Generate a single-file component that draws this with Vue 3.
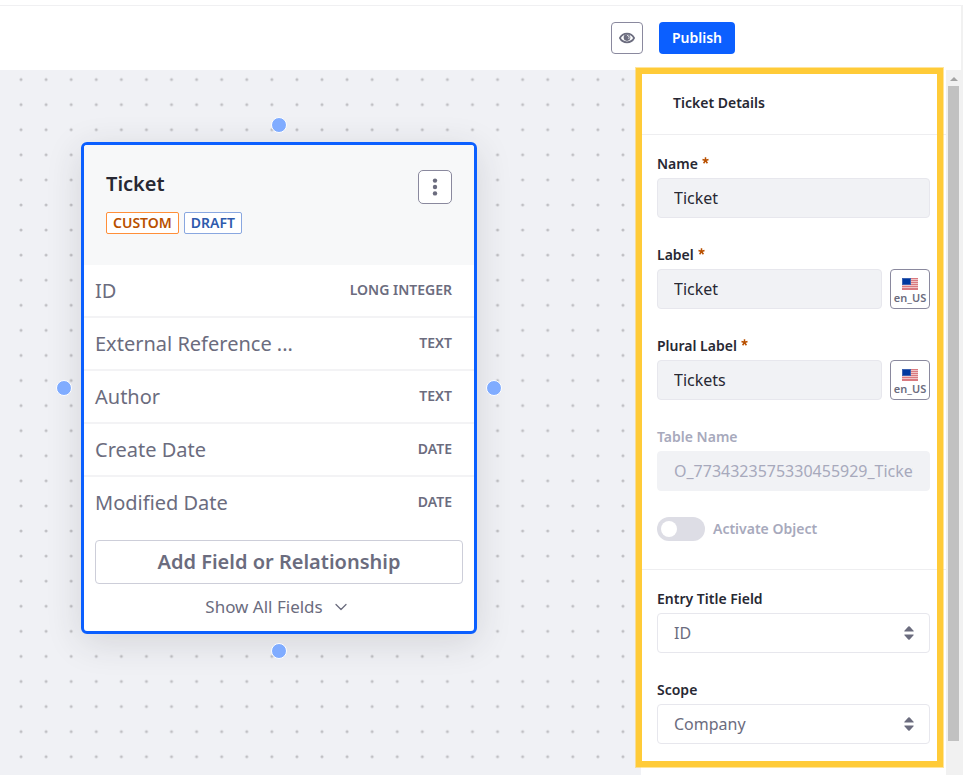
<script setup>
import { ref } from 'vue'

const fields = [
  { name: 'ID', type: 'Long Integer' },
  { name: 'External Reference ...', type: 'Text' },
  { name: 'Author', type: 'Text' },
  { name: 'Create Date', type: 'Date' },
  { name: 'Modified Date', type: 'Date' },
]
const handles = ['top', 'right', 'bottom', 'left']

const details = ref([
  { id: 'name', label: 'Name', value: 'Ticket', required: true },
  { id: 'label', label: 'Label', value: 'Ticket', required: true, localized: true },
  { id: 'plural', label: 'Plural Label', value: 'Tickets', required: true, localized: true },
  { id: 'table', label: 'Table Name', value: 'O_7734323575330455929_Ticket', disabled: true },
])
const selects = ref([
  { id: 'title-field', label: 'Entry Title Field', value: 'ID', options: ['ID', 'Author', 'Create Date'] },
  { id: 'scope', label: 'Scope', value: 'Company', options: ['Company', 'Site'] },
])
</script>

<template>
  <div class="page">
    <header class="toolbar">
      <button class="preview" type="button" aria-label="Preview">
        <svg width="16" height="16" viewBox="0 0 16 16" aria-hidden="true">
          <path d="M.9 8C2.400 5 5 3.700 8 3.700S13.600 5 15.100 8C13.600 11 11 12.300 8 12.300S2.400 11 .9 8Z" fill="none" stroke="currentColor" stroke-width="1.700" />
          <circle cx="8" cy="7.600" r="3.300" fill="currentColor" />
          <path d="M8.600 5a1.900 1.900 0 1 0 2 3.300A3 3 0 0 0 8.600 5Z" fill="#fff" />
          <circle cx="8.300" cy="7.500" r="1.400" fill="currentColor" />
        </svg>
      </button>
      <button class="publish" type="button">Publish</button>
    </header>

    <main class="workspace">
      <section class="canvas">
        <svg class="dots" width="100%" height="100%" aria-hidden="true">
          <defs>
            <pattern id="dot-grid" x="8.500" y="-3" width="25.080" height="25.080" patternUnits="userSpaceOnUse">
              <circle cx="12.540" cy="12.540" r="1.500" fill="#bfbfc3" />
            </pattern>
          </defs>
          <rect width="100%" height="100%" fill="url(#dot-grid)" />
        </svg>

        <article class="node">
          <span v-for="side in handles" :key="side" class="handle" :class="side"></span>
          <div class="node-head">
            <div>
              <h2>Ticket</h2>
              <div class="tags">
                <span class="tag custom">CUSTOM</span>
                <span class="tag draft">DRAFT</span>
              </div>
            </div>
            <button class="kebab" type="button" aria-label="More actions">
              <svg width="20" height="20" viewBox="0 0 20 20" fill="currentColor" aria-hidden="true">
                <circle cx="10" cy="3.600" r="2.200" /><circle cx="10" cy="10" r="2.200" /><circle cx="10" cy="16.400" r="2.200" />
              </svg>
            </button>
          </div>
          <ul class="fields">
            <li v-for="field in fields" :key="field.name">
              <span class="field-name">{{ field.name }}</span>
              <span class="field-type">{{ field.type }}</span>
            </li>
          </ul>
          <div class="node-foot">
            <button class="add" type="button">Add Field or Relationship</button>
            <button class="show-all" type="button">
              Show All Fields
              <svg width="12" height="8" viewBox="0 0 12 8" aria-hidden="true">
                <path d="M1 1.500 6 6.500 11 1.500" fill="none" stroke="currentColor" stroke-width="1.300" stroke-linecap="round" stroke-linejoin="round" />
              </svg>
            </button>
          </div>
        </article>
      </section>

      <aside class="panel">
        <h1>Ticket Details</h1>
        <div class="section">
          <div v-for="item in details" :key="item.id" class="group">
            <label :for="item.id" :class="{ muted: item.disabled }">
              {{ item.label }}
              <svg v-if="item.required" class="star" width="7" height="7" viewBox="0 0 7 7" aria-hidden="true">
                <path d="M3.500 3.500V.3M3.500 3.500 6.500 2.500M3.500 3.500 5.400 6.200M3.500 3.500 1.600 6.200M3.500 3.500.5 2.500" stroke="#b95000" stroke-width="1.500" />
              </svg>
            </label>
            <div class="control">
              <input :id="item.id" v-model="item.value" type="text" :disabled="item.disabled" />
              <button v-if="item.localized" class="locale" type="button">
                <svg width="16" height="12" viewBox="0 0 16 12" aria-hidden="true">
                  <rect width="16" height="12" fill="#f0c4c6" />
                  <path d="M0 .5H16M0 2.500H16M0 4.500H16M0 6.500H16M0 8.500H16M0 10.500H16" stroke="#d97a80" />
                  <path d="M0 11.500H16" stroke="#d97a80" />
                  <rect width="9" height="7" fill="#3c62b0" />
                  <rect x="1" y="1" width="7" height="5" fill="#0039a0" />
                </svg>
                <span>en_US</span>
              </button>
            </div>
          </div>
          <label class="switch muted">
            <input type="checkbox" disabled />
            <span>Activate Object</span>
          </label>
        </div>
        <div class="section">
          <div v-for="item in selects" :key="item.id" class="group">
            <label :for="item.id">{{ item.label }}</label>
            <div class="picker">
              <select :id="item.id" v-model="item.value">
                <option v-for="option in item.options" :key="option">{{ option }}</option>
              </select>
              <svg width="10" height="14" viewBox="0 0 10 14" fill="currentColor" aria-hidden="true">
                <path d="M.8 5.500Q0 5.500.4 4.700L4.300.5Q5-.1 5.700.5L9.600 4.700Q10 5.500 9.200 5.500ZM.8 8.500Q0 8.500.4 9.300L4.300 13.500Q5 14.100 5.700 13.500L9.600 9.300Q10 8.500 9.200 8.500Z" />
              </svg>
            </div>
          </div>
        </div>
        <div class="highlight"></div>
      </aside>

      <div class="scrollbar" aria-hidden="true">
        <svg width="8" height="4" viewBox="0 0 8 4"><path d="M0 4 4 0 8 4Z" fill="#a3a3a3" /></svg>
        <div class="thumb"></div>
      </div>
    </main>
  </div>
</template>

<style>
body {
  margin: 0;
  background: #fff;
}
</style>

<style scoped>
* {
  box-sizing: border-box;
}
.page {
  display: flex;
  flex-direction: column;
  height: 100vh;
  overflow: hidden;
  padding-top: 5px;
  color: #272833;
  font: 16px/24px "Noto Sans", "Open Sans", sans-serif;
}
button,
input,
select {
  margin: 0;
  font: inherit;
}
.toolbar {
  display: flex;
  justify-content: flex-end;
  align-items: center;
  gap: 16px;
  height: 65px;
  flex: none;
  padding-right: 226px;
  border-top: 1px solid #f0f0f2;
  border-right: 2px solid #f1f1f1;
}
.preview {
  display: grid;
  place-items: center;
  width: 32px;
  height: 32px;
  padding: 0;
  border: 1px solid #8a899e;
  border-radius: 4px;
  background: #fff;
  color: #6b6c7e;
}
.publish {
  height: 32px;
  padding: 0 13px;
  border: 0;
  border-radius: 4px;
  background: #0b5fff;
  color: #fff;
  font-size: 14px;
  font-weight: 600;
}
.workspace {
  display: flex;
  flex: 1;
  min-height: 0;
}
.canvas {
  position: relative;
  flex: 1;
  background: #f0f1f5;
}
.dots {
  position: absolute;
  inset: 0;
}
.node {
  position: absolute;
  left: 81px;
  top: 72px;
  width: 396px;
  border: 3px solid #0b5fff;
  border-radius: 6px;
  background: #fff;
  color: #6b6c7e;
  box-shadow: 0 8px 36px rgba(39, 40, 51, 0.14);
}
.handle {
  position: absolute;
  width: 16px;
  height: 16px;
  border: 1px solid #fff;
  border-radius: 50%;
  background: #80acff;
}
.top,
.bottom {
  left: calc(50% - 8px);
}
.left,
.right {
  top: calc(50% - 8px);
}
.top {
  top: -28px;
}
.bottom {
  bottom: -28px;
}
.left {
  left: -28px;
}
.right {
  right: -28px;
}
.node-head {
  display: flex;
  justify-content: space-between;
  align-items: flex-start;
  height: 120px;
  padding: 25px 22px 0;
  border-radius: 3px 3px 0 0;
  background: #f7f8f9;
}
h2 {
  margin: 0 0 14px;
  color: #272833;
  font-size: 20px;
  line-height: 28px;
  font-weight: 600;
}
.tags {
  display: flex;
  gap: 5px;
}
.tag {
  padding: 0 6px;
  border: 1px solid;
  border-radius: 2px;
  background: #fff;
  font-size: 14px;
  line-height: 20px;
  font-weight: 600;
}
.custom {
  border-color: #ff8f39;
  color: #b95000;
}
.draft {
  border-color: #89a7e0;
  color: #2e5aac;
}
.kebab {
  display: grid;
  place-items: center;
  width: 34px;
  height: 34px;
  padding: 0;
  border: 1px solid #8a899e;
  border-radius: 5px;
  background: #fff;
  color: #6b6c7e;
}
.fields {
  margin: 0;
  padding: 0;
  list-style: none;
}
.fields li {
  display: flex;
  justify-content: space-between;
  align-items: center;
  height: 53px;
  padding: 0 22px 0 11px;
  border-bottom: 2px solid #f3f3f5;
}
.fields li:last-child {
  border-color: transparent;
}
.field-name {
  font-size: 20px;
}
.field-type {
  padding-bottom: 2px;
  font-size: 14px;
  font-weight: 600;
  text-transform: uppercase;
}
.node-foot {
  display: flex;
  flex-direction: column;
  align-items: center;
  gap: 8px;
  padding: 10px 11px 9px;
}
.add {
  width: 100%;
  height: 44px;
  border: 1px solid #cdced9;
  border-radius: 4px;
  background: #fff;
  color: inherit;
  font-size: 20px;
  font-weight: 600;
}
.show-all {
  display: flex;
  align-items: center;
  gap: 12px;
  height: 30px;
  padding: 0 6px 0 0;
  border: 0;
  background: none;
  color: inherit;
  font-size: 17px;
}
.panel {
  position: relative;
  width: 305px;
  background: #fff;
}
h1 {
  margin: 0;
  padding: 21px 32px 19px;
  border-bottom: 1px solid #eeeef0;
  font-size: 14px;
  line-height: 24px;
  font-weight: 600;
}
.section {
  display: flex;
  flex-direction: column;
  gap: 26px;
  padding: 18px 16px 28px;
}
.section + .section {
  border-top: 1px solid #eeeef0;
}
.group {
  display: flex;
  flex-direction: column;
  gap: 4px;
}
label {
  display: flex;
  gap: 4px;
  font-size: 14px;
  line-height: 21px;
  font-weight: 600;
}
.star {
  margin-top: 4px;
}
.muted {
  color: #a7a9bc;
}
.control {
  display: flex;
  gap: 8px;
}
.control input {
  flex: 1;
  min-width: 0;
  height: 40px;
  padding: 0 16px;
  border: 1px solid #e7e7ed;
  border-radius: 4px;
  background: #f1f2f5;
  color: #272833;
}
.control input:disabled {
  border-color: #f1f2f5;
  color: #a7a9bc;
}
.locale {
  display: flex;
  flex-direction: column;
  align-items: center;
  gap: 1px;
  width: 40px;
  height: 40px;
  padding: 8px 0 0;
  border: 1px solid #8a899e;
  border-radius: 4px;
  background: #fff;
  color: #6b6c7e;
  font-size: 11px;
  line-height: 14px;
  font-weight: 600;
}
.switch {
  align-items: center;
  gap: 8px;
  line-height: 20px;
}
.switch input {
  appearance: none;
  display: flex;
  width: 48px;
  height: 24px;
  padding: 4px;
  border-radius: 12px;
  background: #dddde5;
}
.switch input::before {
  content: "";
  width: 16px;
  height: 16px;
  border-radius: 50%;
  background: #fff;
}
.picker {
  display: grid;
  align-items: center;
  color: #6b6c7e;
}
.picker > * {
  grid-area: 1 / 1;
}
.picker svg {
  justify-self: end;
  margin-right: 16px;
  pointer-events: none;
}
.picker select {
  appearance: none;
  width: 100%;
  height: 40px;
  padding: 0 16px;
  border: 1px solid #e7e7ed;
  border-radius: 4px;
  background: #fff;
  color: inherit;
}
.highlight {
  position: absolute;
  inset: -2px 3px 8px -5px;
  border: 6px solid #ffcb38;
  outline: 1px solid rgba(255, 203, 56, 0.5);
  pointer-events: none;
}
.scrollbar {
  display: flex;
  flex-direction: column;
  align-items: center;
  gap: 5px;
  width: 17px;
  padding: 7px 4px 34px 2px;
  background: #f1f1f1;
}
.thumb {
  flex: 1;
  width: 100%;
  background: #c1c1c1;
}
</style>
